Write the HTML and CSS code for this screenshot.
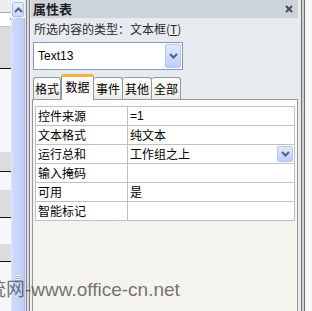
FILE: index.html
```html
<!DOCTYPE html>
<html lang="zh-CN">
<head>
    <meta charset="UTF-8">
    <title>属性表</title>
    <link rel="stylesheet" href="styles.css">
</head>
<body>
    <div class="screen">
        <div class="form-strip">
            <div class="fs-top"></div>
            <div class="fs-field">·</div>
            <div class="fs-gray fs-a"></div>
            <div class="fs-white fs-b"></div>
            <div class="fs-gray fs-c"></div>
            <div class="fs-white fs-d"></div>
            <div class="fs-gray fs-e"></div>
            <div class="fs-white fs-f"></div>
            <div class="fs-gray fs-g"></div>
            <div class="fs-white"></div>
        </div>

        <div class="vscroll">
            <div class="vs-btn">
                <svg width="9" height="6" viewBox="0 0 9 6"><path d="M1 5 L4.5 1.5 L8 5" fill="none" stroke="#4d6185" stroke-width="2"/></svg>
            </div>
            <div class="vs-thumb">
                <div class="grip"></div>
            </div>
        </div>

        <div class="splitter"></div>

        <div class="props">
            <div class="props-head">
                <span class="props-title">属性表</span>
                <svg class="close" width="8" height="8" viewBox="0 0 8 8"><path d="M1 1 L7 7 M7 1 L1 7" stroke="#4b4b4b" stroke-width="2"/></svg>
            </div>
            <div class="props-type">所选内容的类型：文本框(<u>T</u>)</div>

            <div class="combo">
                <span class="combo-text">Text13</span>
                <div class="drop-btn tall">
                    <svg width="9" height="6" viewBox="0 0 9 6"><path d="M1 1 L4.5 4.5 L8 1" fill="none" stroke="#4d6185" stroke-width="2"/></svg>
                </div>
            </div>

            <div class="tabs">
                <div class="tab t1">格式</div>
                <div class="tab active">数据</div>
                <div class="tab">事件</div>
                <div class="tab">其他</div>
                <div class="tab">全部</div>
            </div>

            <div class="tab-body">
                <table class="grid">
                    <colgroup><col class="c-label"><col></colgroup>
                    <tr><td>控件来源</td><td class="val">=1</td></tr>
                    <tr><td>文本格式</td><td>纯文本</td></tr>
                    <tr>
                        <td>运行总和</td>
                        <td class="pick">
                            <div class="pick-row">
                                <span>工作组之上</span>
                                <div class="drop-btn small">
                                    <svg width="9" height="6" viewBox="0 0 9 6"><path d="M1 1 L4.5 4.5 L8 1" fill="none" stroke="#4d6185" stroke-width="2"/></svg>
                                </div>
                            </div>
                        </td>
                    </tr>
                    <tr><td>输入掩码</td><td></td></tr>
                    <tr><td>可用</td><td>是</td></tr>
                    <tr><td>智能标记</td><td></td></tr>
                </table>
            </div>
        </div>

        <div class="edge"></div>
    </div>

    <div class="watermark">统网-www.office-cn.net</div>
</body>
</html>
```

FILE: styles.css
```css
body {
    margin: 0;
    padding: 0;
    width: 312px;
    height: 311px;
    overflow: hidden;
    position: relative;
    font-family: "Noto Sans CJK SC", "Liberation Sans", sans-serif;
    font-size: 12px;
    color: #000;
    background: #f8f8f8;
}

.screen {
    display: flex;
    height: 311px;
}

/* design view strip on the far left */
.form-strip {
    width: 11px;
    display: flex;
    flex-direction: column;
    background: #fafafa;
}

.fs-top {
    height: 12px;
    background: #ececec;
    border-bottom: 1px solid #a9a9a9;
}

.fs-field {
    height: 13px;
    background: #fff;
    border-bottom: 1px solid #c8c8c8;
    font-size: 11px;
    line-height: 11px;
    padding-left: 6px;
}

.fs-gray {
    background: #dcdcdc;
    border-bottom: 1px solid #111;
}

.fs-white {
    background: #f7f7f7;
    flex: 1;
}

.fs-a { height: 41px; }
.fs-b { flex: none; height: 83px; }
.fs-c { height: 19px; }
.fs-d { flex: none; height: 18px; }
.fs-e { height: 27px; }
.fs-f { flex: none; height: 26px; }
.fs-g { height: 17px; }

/* vertical scrollbar */
.vscroll {
    width: 14px;
    display: flex;
    flex-direction: column;
    background: #eef3fd;
}

.vs-btn {
    height: 13px;
    margin: 2px 1px 1px 1px;
    border: 1px solid #a9bdea;
    border-radius: 2px;
    background: linear-gradient(#e6eefe, #c9d8fb);
    display: flex;
    align-items: center;
    justify-content: center;
}

.vs-thumb {
    flex: 1;
    border-left: 1px solid #dbe5fd;
    border-right: 1px solid #a7bdef;
    background: linear-gradient(to right, #cddbfc, #bccff8);
    display: flex;
    align-items: flex-end;
    justify-content: center;
}

.grip {
    width: 6px;
    height: 8px;
    margin-bottom: 28px;
    background: repeating-linear-gradient(#eef3fe 0 1px, #9fb3e3 1px 2px);
}

.splitter {
    width: 6px;
    background: linear-gradient(to right, #e2e2e2 0 1px, #858585 1px 2px, #dadada 2px 4px, #7a7a7a 4px 5px, #f0f0f0 5px 6px);
}

/* property sheet */
.props {
    width: 269px;
    background: #e7eaef;
    display: flex;
    flex-direction: column;
}

.props-head {
    height: 18px;
    margin-right: 2px;
    padding: 0 5px 0 2px;
    background: #cdd3da;
    display: flex;
    align-items: center;
    justify-content: space-between;
}

.props-title {
    font-weight: bold;
    font-size: 13px;
    line-height: 18px;
    color: #1e1e1e;
}

.props-type {
    margin-top: 3px;
    padding-left: 3px;
    line-height: 16px;
    color: #2b2b2b;
}

.combo {
    margin: 5px 0 0 2px;
    width: 150px;
    height: 28px;
    box-sizing: border-box;
    border: 1px solid #7f9db9;
    background: #fff;
    display: flex;
    align-items: center;
    justify-content: space-between;
    padding: 0 1px 0 4px;
}

.combo-text {
    font-family: "Liberation Sans", sans-serif;
    font-size: 12px;
}

.drop-btn {
    box-sizing: border-box;
    border: 1px solid #b5c6ee;
    border-radius: 2px;
    background: linear-gradient(#dfe8fe, #bccffb);
    display: flex;
    align-items: center;
    justify-content: center;
}

.drop-btn.tall {
    width: 16px;
    height: 24px;
}

.drop-btn.small {
    width: 16px;
    height: 16px;
}

.tabs {
    margin: 4px 0 0 2px;
    height: 25px;
    display: flex;
    align-items: flex-end;
    position: relative;
    z-index: 1;
}

.tab {
    width: 29px;
    height: 22px;
    box-sizing: border-box;
    border: 1px solid #919b9c;
    border-bottom: none;
    border-left: none;
    border-radius: 3px 3px 0 0;
    background: linear-gradient(#fefefe, #ecebe6);
    text-align: center;
    line-height: 22px;
}

.tab.t1 {
    width: 28px;
    border-left: 1px solid #919b9c;
}

.tab.active {
    width: 33px;
    height: 26px;
    margin-bottom: -1px;
    background: #fcfcfe;
    border-top: 3px solid #f5b041;
    border-left: 1px solid #919b9c;
    line-height: 20px;
}

.tab-body {
    flex: 1;
    margin: 0 2px 0 1px;
    border: 1px solid #919b9c;
    border-bottom: none;
    background: linear-gradient(#fcfcfe, #f4f3ee 40%);
    padding: 6px 2px 0 2px;
}

.grid {
    width: 260px;
    table-layout: fixed;
    border-collapse: collapse;
    background: #fff;
}

.c-label {
    width: 92px;
}

.grid td {
    height: 18px;
    padding: 0 0 0 2px;
    border: 1px solid #c0c0c0;
    line-height: 18px;
    white-space: nowrap;
    overflow: hidden;
}

.grid td.val {
    font-family: "Liberation Sans", sans-serif;
}

.pick-row {
    display: flex;
    align-items: center;
    justify-content: space-between;
    height: 18px;
    padding-right: 1px;
}

.edge {
    flex: 1;
    background: linear-gradient(to right, #e7eaef 0 1px, #6f6f6f 1px 2px, #cfcfcf 2px 4px, #6f6f6f 4px 5px, #f6f6f6 5px);
}

.watermark {
    position: absolute;
    left: -13px;
    top: 280px;
    font-family: "Liberation Sans", "Noto Sans CJK SC", sans-serif;
    font-size: 19px;
    line-height: 19px;
    color: rgba(80, 80, 80, 0.8);
    white-space: nowrap;
}
```
